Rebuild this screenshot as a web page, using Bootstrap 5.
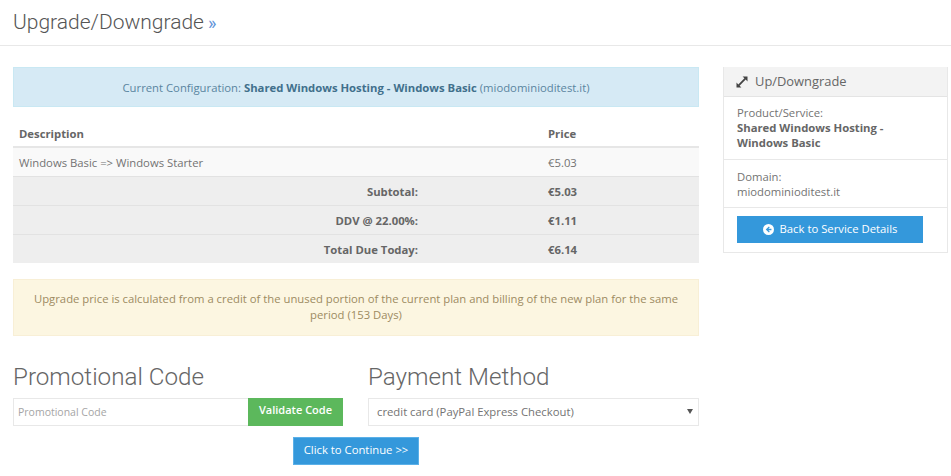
<!DOCTYPE html>
<html lang="en">
<head>
<meta charset="utf-8">
<title>Upgrade/Downgrade</title>
<link href="https://cdn.jsdelivr.net/npm/bootstrap@5.3.0/dist/css/bootstrap.min.css" rel="stylesheet">
<style>
html,body{overflow:hidden}
body{font-family:"Open Sans","Liberation Sans",sans-serif;font-size:11.3px;line-height:15px;color:#737373;background:#fff;width:951px;height:476px}
.page-head{height:46px;border-bottom:1px solid #e8e8e8;padding:8px 13px 0}
.page-head h1{font-family:Roboto,sans-serif;font-weight:300;font-size:21px;line-height:29px;color:#555;margin:0}
.page-head h1 span{color:#5f93d8;font-size:18px;font-weight:400;line-height:20px;margin-left:-1px}
.layout{padding:21px 4px 0 13px;gap:24px}
.main-col{width:686px;flex:none}
.side-col{width:225px;flex:none}
.note-info,.note-warn{text-align:center;border:1px solid;border-radius:0;margin:0}
.note-info{height:40px;background:#d6eaf5;border-color:#c9e8f3;color:#5a85a0;padding:11.5px 8px}
.note-info b{color:#41708c}
.note-warn{height:57px;background:#fcf6e1;border-color:#f8efd6;color:#9d8b62;padding:11px 18px 0;line-height:16px;margin-top:16px}
.price-table{margin:13px 0 0;font-size:11.3px;--bs-table-bg:transparent;--bs-table-color:#737373;table-layout:fixed}
.price-table th,.price-table td{padding:6px;border:0;line-height:16px;vertical-align:middle;color:#737373}
.price-table td{height:29px;border-top:1px solid #e2e2e2}
.price-table thead th{border-bottom:2px solid #e6e6e6;height:27px;padding-top:5px;padding-bottom:4px;color:#666}
.price-table .c-price{width:151px;padding-left:0}
.price-table .c-desc{width:535px}
.price-table .row-item td{background:#f9f9f9;border-top:0;padding-top:7px;padding-bottom:5px}
.price-table .row-sum td{background:#eee;font-weight:700;color:#666;padding-top:6px;padding-bottom:4px}
.price-table .row-sum td:first-child{text-align:right;padding-right:130px}
.price-table .row-last td{height:28px;padding-bottom:3px}
.pay-row{margin-top:26px;gap:25px}
.pay-left{width:330px;flex:none}
.pay-right{width:331px;flex:none}
.pay-title{font-family:Roboto,sans-serif;font-weight:300;font-size:24.2px;line-height:30px;color:#666;margin:0 0 6px}
.promo-input{height:28px;border:1px solid #e8e8e8;border-right:0;border-radius:0;font-size:10.5px;padding:2px 4px;color:#737373;box-shadow:none;flex:1 1 auto;min-width:0}
.promo-input::placeholder{color:#a5a5a5;opacity:1}
.btn-validate{width:95px;height:28px;flex:none;background:#5cb85c;border:0;border-radius:0;color:#fff;font-size:11px;font-weight:600;padding:0 0 2px;margin-left:-1px}
.pay-select{height:28px;border:1px solid #e8e8e8;border-radius:0;font-size:11.3px;line-height:15px;color:#737373;padding:3px 24px 3px 8px;background-size:0;box-shadow:none}
.select-wrap{position:relative}
.select-wrap::after{content:"";position:absolute;right:6px;top:11px;border-left:3px solid transparent;border-right:3px solid transparent;border-top:5px solid #555;pointer-events:none}
.continue-wrap{margin-top:11px;padding-left:280px}
.btn-continue{width:126px;height:28px;background:#3498db;border:1px solid #5bb0e8;border-radius:0;color:#fff;font-size:11.3px;padding:0}
.side-card{border:1px solid #e8e8e8;border-top:0;border-radius:0;--bs-card-border-color:#e8e8e8;color:#737373}
.side-head{height:30px;background:#f3f3f3;border-bottom:1px solid #e4e4e4;padding:0 12px;font-size:12.9px;color:#666;gap:7px}
.side-sec{padding:8px 13px 8px;border-bottom:1px solid #e8e8e8}
.side-sec b{color:#666}
.sec-one{height:63px}
.sec-two{height:48px;padding-top:8.5px}
.sec-foot{padding:8px 13px 8px;height:44px}
.btn-back{width:186px;height:27px;background:#3498db;border:0;border-radius:0;color:#fff;font-size:11.3px;padding:0;gap:6px}
</style>
</head>
<body>
<header class="page-head"><h1>Upgrade/Downgrade <span>»</span></h1></header>
<div class="layout d-flex align-items-start">
  <main class="main-col">
    <div class="note-info">Current Configuration: <b>Shared Windows Hosting - Windows Basic</b> (miodominioditest.it)</div>
    <table class="table price-table">
      <thead><tr><th class="c-desc">Description</th><th class="c-price">Price</th></tr></thead>
      <tbody>
        <tr class="row-item"><td>Windows Basic =&gt; Windows Starter</td><td class="c-price">€5.03</td></tr>
        <tr class="row-sum"><td>Subtotal:</td><td class="c-price">€5.03</td></tr>
        <tr class="row-sum"><td>DDV @ 22.00%:</td><td class="c-price">€1.11</td></tr>
        <tr class="row-sum row-last"><td>Total Due Today:</td><td class="c-price">€6.14</td></tr>
      </tbody>
    </table>
    <div class="note-warn">Upgrade price is calculated from a credit of the unused portion of the current plan and billing of the new plan for the same period (153 Days)</div>
    <div class="pay-row d-flex">
      <div class="pay-left">
        <h2 class="pay-title">Promotional Code</h2>
        <div class="d-flex">
          <input class="form-control promo-input" type="text" placeholder="Promotional Code">
          <button class="btn btn-validate" type="button">Validate Code</button>
        </div>
      </div>
      <div class="pay-right">
        <h2 class="pay-title">Payment Method</h2>
        <div class="select-wrap">
          <select class="form-select pay-select"><option>credit card (PayPal Express Checkout)</option></select>
        </div>
      </div>
    </div>
    <div class="continue-wrap"><button class="btn btn-continue" type="button">Click to Continue &gt;&gt;</button></div>
  </main>
  <aside class="side-col">
    <div class="card side-card">
      <div class="side-head d-flex align-items-center">
        <svg width="12" height="12" viewBox="0 0 12 12" aria-hidden="true"><path fill="#444" d="M6.6 0.5h4.9v4.9L9.7 3.6 3.6 9.7l1.8 1.8H.5V6.6l1.8 1.8 6.1-6.1z"/></svg>
        <span>Up/Downgrade</span>
      </div>
      <div class="side-sec sec-one">Product/Service:<br><b>Shared Windows Hosting - Windows Basic</b></div>
      <div class="side-sec sec-two">Domain:<br>miodominioditest.it</div>
      <div class="sec-foot">
        <button class="btn btn-back d-flex align-items-center justify-content-center" type="button">
          <svg width="11" height="11" viewBox="0 0 12 12" aria-hidden="true"><path fill="#fff" fill-rule="evenodd" d="M6 0a6 6 0 1 1 0 12A6 6 0 0 1 6 0zM6.4 2.6 3 6l3.4 3.4 1-1L5.9 6.8H9.2V5.2H5.9l1.5-1.6z"/></svg>
          <span>Back to Service Details</span>
        </button>
      </div>
    </div>
  </aside>
</div>
<script src="https://cdn.jsdelivr.net/npm/bootstrap@5.3.0/dist/js/bootstrap.bundle.min.js"></script>
</body>
</html>
